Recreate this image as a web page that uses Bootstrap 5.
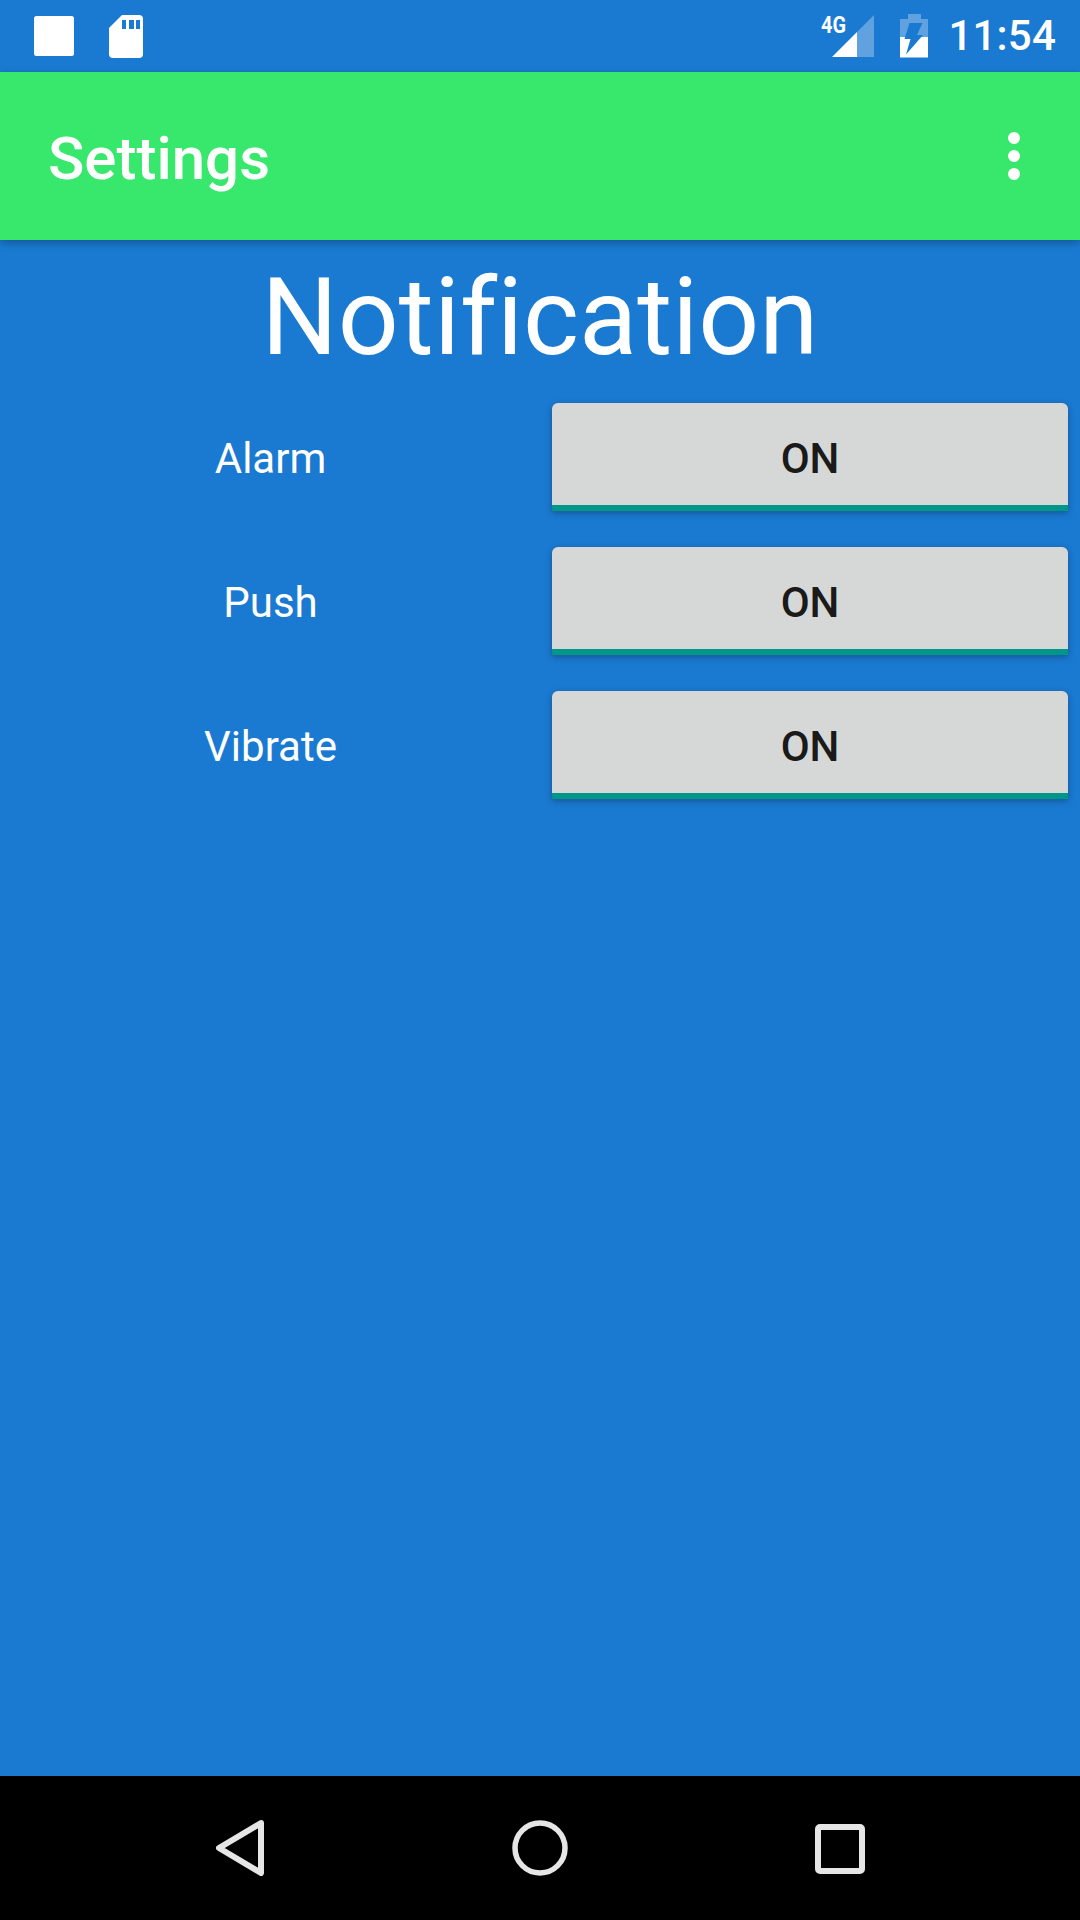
<!DOCTYPE html>
<html lang="en">
<head>
<meta charset="utf-8">
<title>Settings</title>
<link href="https://cdn.jsdelivr.net/npm/bootstrap@5.3.0/dist/css/bootstrap.min.css" rel="stylesheet">
<style>
html,body{height:1920px;margin:0}
body{background:#1a7ad1;font-family:Roboto,"Liberation Sans",sans-serif;color:#fff;overflow:hidden;font-variant-ligatures:none}
.shell{height:1920px}
.statusbar{height:72px;background:#1a7ad1}
.status-left{padding-left:34px;gap:35px}
.status-right{padding-right:24px}
.battery-icon{margin-left:26px}
.clock{font-size:42px;font-weight:500;line-height:1;margin-left:20px;letter-spacing:.2px}
.appbar{height:168px;background:#38e86c;padding:0 60px 0 48px;box-shadow:0 3px 8px rgba(0,0,0,.28);position:relative;z-index:2}
.appbar-title{font-size:60px;font-weight:500;line-height:1;margin:6px 0 0}
.overflow-dots{gap:6px}
.overflow-dots span{display:block;width:12px;height:12px;border-radius:50%;background:#fff}
.screen-title{font-size:107px;font-weight:400;line-height:132px;margin:0;padding-top:12px;height:163px;text-align:center}
.setting-row{height:108px;margin-bottom:36px;padding-right:12px}
.setting-label{width:541px;font-size:42px;text-align:center;line-height:1;padding-top:3px}
.toggle-on{width:516px;height:108px;background:#d6d8d7;color:#1a1a1a;border:0;border-bottom:6px solid #009688;border-radius:6px 6px 0 0;font-size:42px;font-weight:500;padding:8px 0 0;box-shadow:0 2px 7px rgba(0,0,0,.3)}
.navbar-bottom{height:144px;background:#000;padding-top:44px;padding-left:216px}
.nav-back{margin-right:248px}
.nav-home{margin-right:247px}
</style>
</head>
<body>
<div class="shell d-flex flex-column">
  <div class="statusbar d-flex align-items-center justify-content-between">
    <div class="status-left d-flex align-items-center">
      <svg width="40" height="40" viewBox="0 0 40 40"><rect width="40" height="40" rx="2.5" fill="#fff"/></svg>
      <svg width="34" height="43" viewBox="0 0 34 43"><path d="M13 0H30a4 4 0 0 1 4 4V39a4 4 0 0 1-4 4H4a4 4 0 0 1-4-4V13Z" fill="#fff"/><path d="M13 5h4v9h-4zM20 5h5v9h-5zM27 5h4v9h-4z" fill="#1a7ad1"/></svg>
    </div>
    <div class="status-right d-flex align-items-center">
      <svg width="53" height="52" viewBox="0 -4 53 52"><text x="0" y="19" font-family="Roboto,sans-serif" font-size="24" font-weight="700" fill="#fff" textLength="25" lengthAdjust="spacingAndGlyphs">4G</text><path d="M36 18 53 1V43H36Z" fill="#fff" fill-opacity=".3"/><path d="M11 43 36 18V43Z" fill="#fff"/></svg>
      <svg class="battery-icon" width="28" height="44" viewBox="0 0 28 44"><defs><mask id="boltcut"><rect width="28" height="44" fill="#fff"/><path d="M9.500 9H22.500L17 21H23L6 40.500 10.500 25H4.500Z" fill="#000"/></mask></defs><g mask="url(#boltcut)"><path d="M8 0H21V5H28V23H0V5H8Z" fill="#fff" fill-opacity=".3"/><path d="M0 23H28V43.500H0Z" fill="#fff"/></g></svg>
      <span class="clock">11:54</span>
    </div>
  </div>
  <div class="appbar d-flex align-items-center justify-content-between">
    <h1 class="appbar-title">Settings</h1>
    <div class="overflow-dots d-flex flex-column"><span></span><span></span><span></span></div>
  </div>
  <main class="flex-grow-1">
    <h2 class="screen-title">Notification</h2>
    <div class="setting-row d-flex align-items-center"><div class="setting-label">Alarm</div><button class="btn toggle-on ms-auto" type="button">ON</button></div>
    <div class="setting-row d-flex align-items-center"><div class="setting-label">Push</div><button class="btn toggle-on ms-auto" type="button">ON</button></div>
    <div class="setting-row d-flex align-items-center"><div class="setting-label">Vibrate</div><button class="btn toggle-on ms-auto" type="button">ON</button></div>
  </main>
  <div class="navbar-bottom d-flex align-items-start">
    <svg class="nav-back" width="48" height="56" viewBox="0 0 48 56"><path d="M45 3 3 28 45 53Z" fill="none" stroke="#e6e6e6" stroke-width="6" stroke-linejoin="round"/></svg>
    <svg class="nav-home" width="56" height="56" viewBox="0 0 56 56"><circle cx="28" cy="28" r="25" fill="none" stroke="#e6e6e6" stroke-width="5.500"/></svg>
    <svg class="mt-1" width="50" height="50" viewBox="0 0 50 50"><rect x="3" y="3" width="44" height="44" rx="2" fill="none" stroke="#e6e6e6" stroke-width="6"/></svg>
  </div>
</div>
</body>
</html>
